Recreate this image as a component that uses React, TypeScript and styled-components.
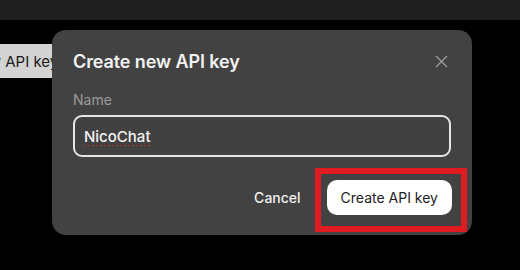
import styled, { createGlobalStyle } from "styled-components";

const GlobalStyle = createGlobalStyle`
  html, body {
    margin: 0;
    padding: 0;
    background: #000;
    font-family: Inter, "Noto Sans", sans-serif;
  }
`;

const Page = styled.div`
  width: 520px;
  height: 270px;
  position: relative;
  overflow: hidden;
  background: #000;
`;

const TopBar = styled.div`
  height: 20px;
  background: #1e1e1e;
`;

const Toolbar = styled.div`
  display: flex;
  padding-top: 24px;
`;

const GhostButton = styled.button`
  height: 34px;
  margin-left: -41px;
  padding: 0 10px;
  border: none;
  border-radius: 4px;
  background: #d3d3d3;
  color: #1a1a1a;
  font-family: Inter, sans-serif;
  font-size: 15px;
  white-space: nowrap;
`;

const Dialog = styled.div`
  position: absolute;
  left: 52px;
  top: 30px;
  width: 420px;
  height: 205px;
  box-sizing: border-box;
  padding: 19px 20px 20px 21px;
  background: #424242;
  border-radius: 14px;
  display: flex;
  flex-direction: column;
`;

const Header = styled.div`
  display: flex;
  align-items: center;
  justify-content: space-between;
  height: 24px;
`;

const Title = styled.h2`
  margin: 0;
  font-size: 18px;
  font-weight: 600;
  color: #f2f2f2;
  letter-spacing: -0.1px;
`;

const Close = styled.button`
  display: flex;
  padding: 0;
  margin-right: 4px;
  border: none;
  background: none;
  color: #9a9a9a;
`;

const Label = styled.label`
  margin-top: 18px;
  font-size: 14px;
  color: #9b9b9b;
`;

const Input = styled.input`
  margin-top: 7px;
  height: 42px;
  box-sizing: border-box;
  width: 378px;
  padding: 0 9px;
  border: 2px solid #e6e6e6;
  border-radius: 9px;
  background: #414141;
  color: #f4f4f4;
  font-family: Inter, sans-serif;
  font-size: 15px;
  font-weight: 500;
  outline: none;
  text-decoration: underline dotted #c0392b;
  text-underline-offset: 4px;
`;

const Footer = styled.div`
  margin-top: auto;
  display: flex;
  justify-content: flex-end;
  align-items: center;
  gap: 26px;
`;

const CancelButton = styled.button`
  padding: 0;
  border: none;
  background: none;
  color: #f0f0f0;
  font-family: Inter, sans-serif;
  font-size: 14px;
  font-weight: 500;
`;

const Highlight = styled.div`
  position: relative;
  &::after {
    content: "";
    position: absolute;
    inset: -12px -15px -17px -12px;
    border: 6px solid #e11b22;
    pointer-events: none;
  }
`;

const PrimaryButton = styled.button`
  height: 35px;
  padding: 0 14px;
  border: none;
  border-radius: 10px;
  background: #ffffff;
  color: #222;
  font-family: Inter, sans-serif;
  font-size: 14px;
`;

export default function App() {
  return (
    <>
      <GlobalStyle />
      <Page>
        <TopBar />
        <Toolbar>
          <GhostButton>New API key</GhostButton>
        </Toolbar>
        <Dialog>
          <Header>
            <Title>Create new API key</Title>
            <Close aria-label="Close">
              <svg width="13" height="13" viewBox="0 0 13 13" fill="none">
                <path d="M1 1L12 12M12 1L1 12" stroke="currentColor" strokeWidth="1.4" />
              </svg>
            </Close>
          </Header>
          <Label>Name</Label>
          <Input defaultValue="NicoChat" />
          <Footer>
            <CancelButton>Cancel</CancelButton>
            <Highlight>
              <PrimaryButton>Create API key</PrimaryButton>
            </Highlight>
          </Footer>
        </Dialog>
      </Page>
    </>
  );
}
